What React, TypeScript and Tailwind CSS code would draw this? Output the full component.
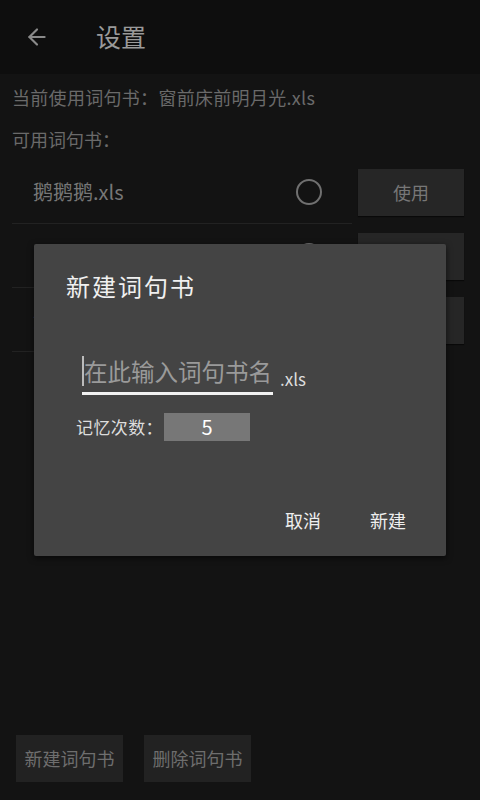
import { ArrowLeft } from 'lucide-react';

const font = { fontFamily: '"Noto Sans CJK SC", "Noto Sans", Roboto, sans-serif' };

const books = ['鹅鹅鹅.xls', '窗前床前明月光.xls', '测试.xls'];

function BookRow({ name }: { name: string }) {
  return (
    <div className="flex items-center h-[64px]">
      <div className="flex items-center w-[340px] h-full border-b border-[#222] ml-[12px]">
        <span className="ml-[21px] flex-1 text-[20px] text-[#777]">{name}</span>
        <span className="w-[26px] h-[26px] rounded-full border-[2.5px] border-[#707070] mr-[30px]" />
      </div>
      <button
        type="button"
        className="ml-[6px] w-[106px] h-[47px] bg-[#262626] text-[18px] text-[#777] shadow-[0_1px_1px_rgba(0,0,0,0.5)]"
      >
        使用
      </button>
    </div>
  );
}

export default function App() {
  return (
    <div className="relative w-[480px] h-[800px] bg-[#131313] overflow-hidden" style={font}>
      {/* Toolbar */}
      <div className="flex items-center h-[74px] bg-[#0e0e0e]">
        <ArrowLeft size={26} strokeWidth={2} className="ml-[24px] text-[#8a8a8a]" />
        <span className="ml-[46px] text-[25px] text-[#9a9a9a]">设置</span>
      </div>

      <div className="px-[12px] pt-[10px] text-[18px] leading-[26px] tracking-[0.3px] text-[#6a6a6a]">
        当前使用词句书：窗前床前明月光.xls
      </div>
      <div className="px-[12px] pt-[16px] text-[18px] leading-[26px] text-[#6a6a6a]">可用词句书：</div>

      <div className="mt-[8px] flex flex-col">
        {books.map((b) => (
          <BookRow key={b} name={b} />
        ))}
      </div>

      {/* Bottom buttons */}
      <div className="absolute left-[16px] top-[735px] flex gap-[21px]">
        <button type="button" className="w-[107px] h-[47px] bg-[#222] text-[18px] text-[#6e6e6e]">
          新建词句书
        </button>
        <button type="button" className="w-[107px] h-[47px] bg-[#222] text-[18px] text-[#6e6e6e]">
          删除词句书
        </button>
      </div>

      {/* Dialog */}
      <div className="absolute left-[34px] top-[244px] w-[412px] h-[312px] bg-[#444] rounded-[2px] shadow-[0_2px_6px_rgba(0,0,0,0.6)] flex flex-col">
        <div className="ml-[32px] mt-[26px] text-[24px] tracking-[2px] text-[#f0f0f0] leading-[32px]">新建词句书</div>

        <div className="ml-[48px] mt-[50px] flex items-end">
          <div className="relative w-[191px] border-b-[3px] border-[#f2f2f2] pb-[2px]">
            <span className="absolute left-0 top-[4px] w-[2px] h-[30px] bg-[#bbb]" />
            <span className="text-[23.5px] text-[#9a9a9a] leading-[38px] pl-[2px] whitespace-nowrap">在此输入词句书名</span>
          </div>
          <span className="ml-[7px] mb-[4px] text-[17px] text-[#ddd]">.xls</span>
        </div>

        <div className="ml-[42px] mt-[18px] flex items-center">
          <span className="text-[17px] tracking-[0.4px] text-[#ddd]">记忆次数：</span>
          <div className="ml-[1px] w-[86px] h-[28px] bg-[#777] flex items-center justify-center text-[20px] text-white">
            5
          </div>
        </div>

        <div className="mt-auto mb-[22px] flex justify-end gap-[49px] mr-[40px]">
          <button type="button" className="text-[18px] text-[#eee]">取消</button>
          <button type="button" className="text-[18px] text-[#eee]">新建</button>
        </div>
      </div>
    </div>
  );
}
